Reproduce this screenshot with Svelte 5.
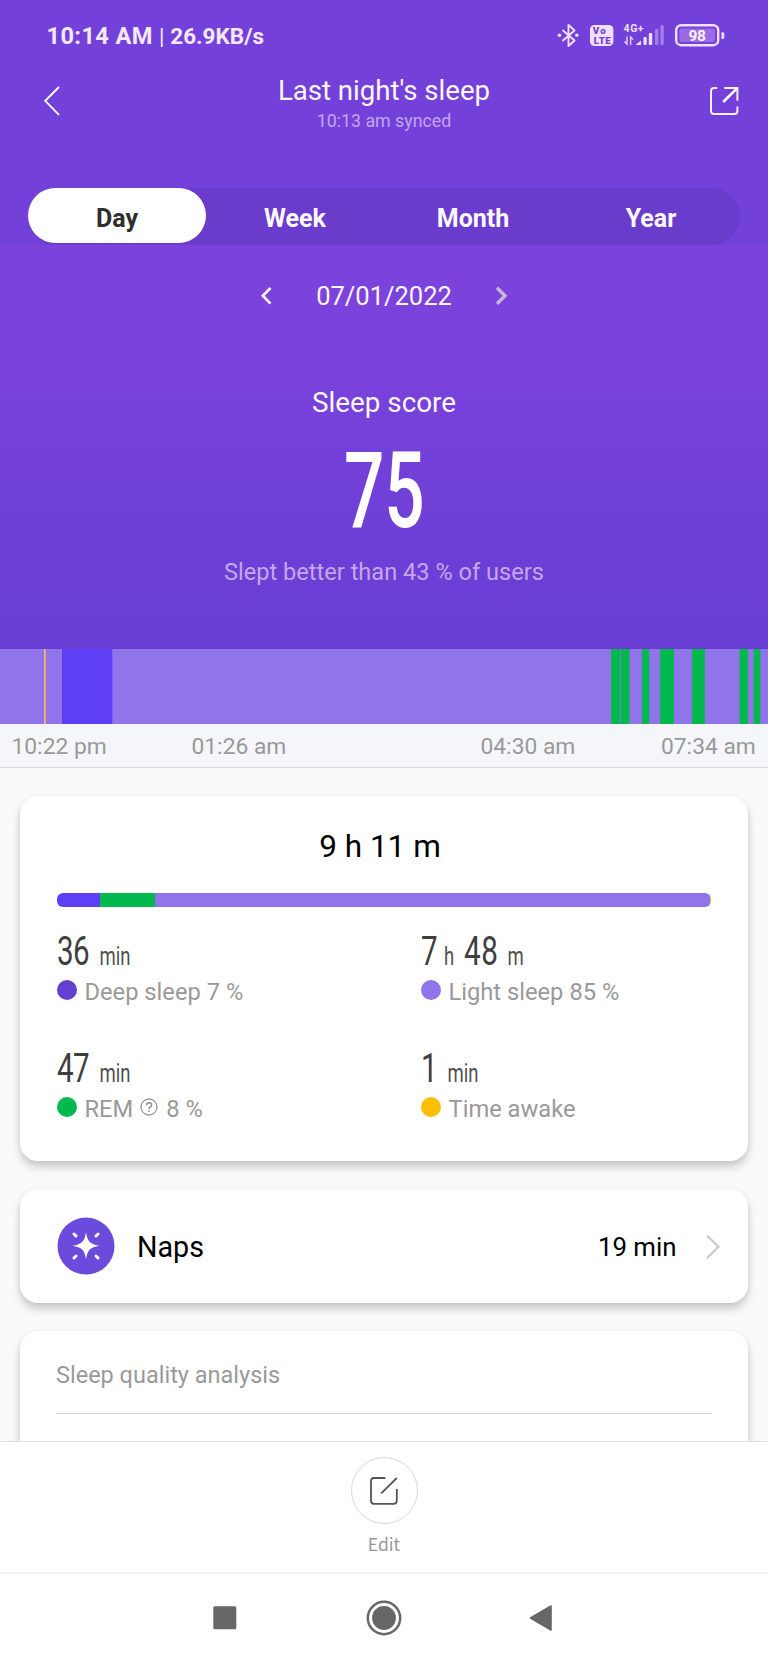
<script>
  const tabs = ['Day', 'Week', 'Month', 'Year'];

  // Sleep stage blocks along the night, in px of the 768px timeline.
  const stages = [
    { kind: 'awake', x: 44, w: 1.7 },
    { kind: 'deep', x: 62, w: 50.3 },
    { kind: 'rem', x: 611.2, w: 8.7 },
    { kind: 'rem', x: 620.8, w: 8.7 },
    { kind: 'rem', x: 642, w: 7.2 },
    { kind: 'rem', x: 660, w: 14 },
    { kind: 'rem', x: 692, w: 12.8 },
    { kind: 'rem', x: 739.6, w: 8.4 },
    { kind: 'rem', x: 753.6, w: 6.8 }
  ];

  const stats = [
    { parts: [['36', 'min']], color: '#6340d0', label: 'Deep sleep', pct: '7 %' },
    { parts: [['7', 'h'], ['48', 'm']], color: '#9074e9', label: 'Light sleep', pct: '85 %' },
    { parts: [['47', 'min']], color: '#03b94e', label: 'REM', pct: '8 %', help: true },
    { parts: [['1', 'min']], color: '#fcbf05', label: 'Time awake', pct: '' }
  ];
</script>

<div class="screen">
  <header class="top">
    <div class="status">
      <span class="clock">10:14 AM</span><span class="bar">|</span><span class="rate">26.9KB/s</span>
      <svg class="sys" width="170" height="28" viewBox="0 0 170 28">
        <g fill="none" stroke="#f1dffd" stroke-width="1.9" stroke-linejoin="round" stroke-linecap="round">
          <path d="M6 8.5 L17.5 18.5 L11.5 24 V3 L17.5 8.5 L6 18.5" />
        </g>
        <circle cx="2.4" cy="13.3" r="1.8" fill="#f1dffd" />
        <circle cx="19.8" cy="13.3" r="1.8" fill="#f1dffd" />
        <rect x="33" y="3" width="23.4" height="21" rx="4.5" fill="#f1dffd" />
        <text x="35.8" y="12.4" class="volte" textLength="13">Vo</text>
        <text x="36.8" y="21.6" class="volte" textLength="17">LTE</text>
        <text x="66.6" y="9.5" class="net" textLength="20">4G+</text>
        <g fill="none" stroke="#e6cffb" stroke-width="1.4">
          <path d="M70 14.5 V22 L67.5 19.5 M73.6 23 V15 L76 17.5" />
        </g>
        <g fill="#f1dffd">
          <path d="M78.5 23 L84 18.5 V23 Z" />
          <rect x="86.5" y="15" width="3.2" height="8" rx="1" />
          <rect x="91.8" y="11" width="3.4" height="12" rx="1" />
        </g>
        <g fill="#a47deb">
          <rect x="98" y="7" width="3.4" height="16" rx="1" />
          <rect x="103.4" y="3" width="3.4" height="20" rx="1" />
        </g>
        <rect x="119.2" y="3.2" width="42" height="20" rx="5" fill="none" stroke="#f1dffd" stroke-width="2.4" />
        <rect x="122.4" y="6.4" width="35.6" height="13.6" rx="2" fill="#9a6be4" />
        <path d="M164.5 10 q2.8 0 2.8 2 v3 q0 2 -2.8 2 z" fill="#f1dffd" />
        <text x="131.5" y="19" class="pct" textLength="17.5">98</text>
      </svg>
    </div>

    <div class="appbar">
      <svg class="back" width="18" height="32" viewBox="0 0 18 32">
        <path d="M16 2 L2.2 15.8 L16 29.8" fill="none" stroke="#fff" stroke-width="1.9" />
      </svg>
      <div class="titles">
        <div class="title">Last night's sleep</div>
        <div class="synced">10:13 am synced</div>
      </div>
      <svg class="share" width="30" height="30" viewBox="0 0 30 30">
        <g fill="none" stroke="#f8ecff" stroke-width="2">
          <path d="M8.2 2 H5 Q2 2 2 5 V25 Q2 28 5 28 H25.5 Q28.4 28 28.4 25 V20.5" />
          <path d="M15.2 2 H28.4 V14.8" />
        </g>
        <path d="M28 2.4 L14.2 16" fill="none" stroke="#fff" stroke-width="2.6" />
      </svg>
    </div>

    <nav class="tabs">
      {#each tabs as tab, i}
        <span class="tab" class:active={i === 0}><b>{tab}</b></span>
      {/each}
    </nav>
  </header>

  <section class="hero">
    <div class="date">
      <svg width="13" height="20" viewBox="0 0 13 20"><path d="M10.5 2 L2.8 9.8 L10.5 17.6" fill="none" stroke="#fdf3ff" stroke-width="2.7" /></svg>
      <span>07/01/2022</span>
      <svg width="13" height="20" viewBox="0 0 13 20"><path d="M2 1.8 L10 9.8 L2 17.8" fill="none" stroke="#c9b4dc" stroke-width="3.4" /></svg>
    </div>
    <div class="score-label">Sleep score</div>
    <div class="score"><span>75</span></div>
    <div class="compare">Slept better than 43 % of users</div>
  </section>

  <svg class="timeline" width="768" height="75" viewBox="0 0 768 75">
    <rect width="768" height="75" fill="#9074e9" />
    {#each stages as s}
      <rect class={s.kind} x={s.x} y="0" width={s.w} height="75" />
    {/each}
  </svg>
  <div class="axis">
    <span>10:22 pm</span><span>01:26 am</span><span>04:30 am</span><span>07:34 am</span>
  </div>

  <main class="cards">
    <section class="card summary">
      <div class="total">9 h 11 m</div>
      <div class="split"><i class="s-deep"></i><i class="s-rem"></i><i class="s-light"></i><i class="s-awake"></i></div>
      <div class="stats">
        {#each stats as s}
          <div class="stat">
            <div class="value" class:pair={s.parts.length > 1}>
              {#each s.parts as [n, u]}<span class="num">{n}</span><span class="unit">{u}</span>{/each}
            </div>
            <div class="legend">
              <i class="dot" style="background:{s.color}"></i>
              <span>{s.label}</span>
              {#if s.help}
                <svg width="18" height="18" viewBox="0 0 18 18">
                  <circle cx="9" cy="9" r="8" fill="none" stroke="#999" stroke-width="1.3" />
                  <path d="M6.5 7.3 Q6.5 4.7 9 4.7 Q11.6 4.7 11.6 7 Q11.6 8.2 10 9.1 Q9 9.7 9 11" fill="none" stroke="#8d8d8d" stroke-width="1.4" />
                  <circle cx="9" cy="13.1" r=".9" fill="#8d8d8d" />
                </svg>
              {/if}
              {#if s.pct}<span>{s.pct}</span>{/if}
            </div>
          </div>
        {/each}
      </div>
    </section>

    <section class="card naps">
      <svg width="58" height="58" viewBox="0 0 58 58">
        <circle cx="29" cy="29" r="28.5" fill="#6b4bdc" />
        <path d="M29 15.5 C30.6 24.6 33 27.3 42.5 28.8 C33 30.4 30.6 33 29 42.2 C27.4 33 25 30.4 15.5 28.8 C25 27.3 27.4 24.6 29 15.5 Z" fill="#fff" />
        <g stroke="#fff" stroke-width="3" stroke-linecap="round">
          <path d="M17 17 L19 19 M41 17 L39 19 M17 41 L19 39 M41 41 L39 39" />
        </g>
      </svg>
      <span class="naps-label">Naps</span>
      <span class="naps-value">19 min</span>
      <svg class="go" width="16" height="26" viewBox="0 0 16 26"><path d="M2 1.5 L13.4 12.8 L2 24.2" fill="none" stroke="#c9c9c9" stroke-width="2.2" /></svg>
    </section>

    <section class="card quality">
      <h2>Sleep quality analysis</h2>
    </section>
  </main>

  <footer class="edit">
    <span class="ring">
      <svg width="30" height="30" viewBox="0 0 30 30" fill="none" stroke="#555" stroke-width="1.8">
        <path d="M16.4 2 H5 Q2 2 2 5 V24.8 Q2 27.8 5 27.8 H24.6 Q27.8 27.8 27.8 24.8 V13" />
        <path d="M12.2 17.4 L27.8 2" />
      </svg>
    </span>
    <span class="edit-label">Edit</span>
  </footer>

  <div class="sysnav">
    <svg width="24" height="24" viewBox="0 0 24 24"><rect x=".3" y=".3" width="23" height="23" rx="1.5" fill="#676767" /></svg>
    <svg width="36" height="36" viewBox="0 0 36 36"><circle cx="18" cy="18" r="16.2" fill="none" stroke="#676767" stroke-width="2.5" /><circle cx="18" cy="18" r="11.9" fill="#676767" /></svg>
    <svg width="24" height="28" viewBox="0 0 24 28"><path d="M1.5 14 L22 2 V26 Z" fill="#676767" stroke="#676767" stroke-width="1.6" stroke-linejoin="round" /></svg>
  </div>
</div>

<style>
  :global(body) { margin: 0; }
  .screen {
    width: 768px; height: 1664px; overflow: hidden; background: #fafafb;
    display: flex; flex-direction: column;
    font-family: Roboto, sans-serif; color: #000; white-space: nowrap;
  }
  .screen > * { flex: none; box-sizing: border-box; }
  svg { display: block; flex: none; }

  .top { height: 245px; background: #7341d9; }
  .status { height: 72px; display: flex; align-items: center; padding: 0 41px 0 46.5px; color: #f5e7fe; font-weight: 700; }
  .clock { font-size: 23.6px; letter-spacing: .4px; }
  .bar { font-size: 22px; font-weight: 400; margin: 0 6px; }
  .rate { font-size: 22.5px; }
  .sys { margin-left: auto; }
  .volte { font: 900 9.8px Roboto, sans-serif; fill: #7341d9; }
  .net { font: 700 10.5px Roboto, sans-serif; fill: #f1dffd; }
  .pct { font: 700 15.5px Roboto, sans-serif; fill: #fbf2ff; }

  .appbar { height: 60px; display: grid; grid-template-columns: 1fr auto 1fr; padding: 0 29px 0 43px; color: #fff; }
  .back { margin-top: 13px; }
  .share { margin-top: 14px; justify-self: end; }
  .titles { text-align: center; padding-top: 1px; margin-left: -14px; }
  .title { font-size: 27.6px; line-height: 35px; color: #fdf6ff; }
  .synced { font-size: 17.8px; line-height: 22px; margin-top: 2px; color: #c5a4f0; }

  .tabs { margin: 56px 28px 0; height: 57px; border-radius: 29px; background: #6a3ccb; display: grid; grid-template-columns: repeat(4, 1fr); }
  .tab { height: 55px; display: flex; align-items: center; justify-content: center; color: #fdf7ff; font-size: 25px; padding-top: 5px; box-sizing: border-box; }
  .tab b { font-weight: 700; }
  .active { background: #fff; color: #2e2e2e; border-radius: 28px; }

  .hero { height: 404px; background: linear-gradient(#7c42dc 0, #7a42dc 28%, #6d3fd6 75%, #693dd3); text-align: center; padding-top: 33px; color: #fdf6ff; }
  .date { height: 36px; display: flex; align-items: center; justify-content: center; gap: 43px; font-size: 25.5px; }
  .score-label { margin-top: 70px; font-size: 27.8px; line-height: 37px; }
  .score { margin-top: 3px; height: 133px; line-height: 135px; font-size: 106px; font-weight: 500; color: #fff; }
  .score span { display: inline-block; transform: scaleX(.67); }
  .compare { font-size: 23.6px; line-height: 31px; color: #c6a6ef; }

  .awake { fill: #f4b95c; }
  .deep { fill: #5e3ff6; }
  .rem { fill: #03b94e; }
  .axis { height: 44px; background: #f5f6f9; border-bottom: 1px solid #d6d9df; display: grid; grid-template-columns: 180px 289px 180.5px 1fr; padding-left: 11.5px; font-size: 22.8px; line-height: 45px; color: #999; }

  .cards { height: 673px; overflow: hidden; padding: 28px 20px 0; }
  .card { background: #fff; border-radius: 18px; box-shadow: 0 6px 10px rgba(0, 0, 0, .19), 0 1px 5px rgba(0, 0, 0, .06); box-sizing: border-box; margin-bottom: 28px; }
  .summary { height: 365px; padding: 30px 37px 0; }
  .total { text-align: center; font-size: 31.5px; line-height: 41px; padding-right: 8px; }
  .split { height: 14px; margin-top: 26px; border-radius: 6px; overflow: hidden; display: flex; }
  .split i { display: block; }
  .s-deep { width: 43px; background: #5e3ff6; }
  .s-rem { width: 55px; background: #03b94e; }
  .s-light { flex: 1; background: #9074e9; }
  .s-awake { width: 1.5px; background: #fcbf05; }
  .stats { display: grid; grid-template-columns: 364px 1fr; grid-auto-rows: 117px; margin-top: 22px; }
  .value { height: 46px; line-height: 46px; transform: scaleX(.74); transform-origin: left; display: flex; align-items: baseline; color: #3f3f3f; }
  .num { font-size: 40px; font-weight: 450; letter-spacing: -.8px; }
  .unit { font-size: 25px; color: #505050; margin-left: 14px; }
  .pair .unit { margin-left: 9.5px; }
  .pair .unit + .num { margin-left: 13px; letter-spacing: 1px; }
  .pair .num + .unit:last-child { margin-left: 12px; }
  .legend { display: flex; align-items: center; height: 32px; margin-top: -1px; font-size: 23.7px; color: #999; }
  .legend span { line-height: 32px; padding-top: 3px; margin-right: 6px; }
  .legend svg { margin: 0 8px 0 1px; }
  .dot { width: 20px; height: 20px; border-radius: 50%; margin-right: 7.5px; }

  .naps { height: 114px; display: flex; align-items: center; padding: 0 27.5px 0 36.5px; }
  .naps-label { font-size: 28.7px; margin-left: 22.5px; padding-top: 2px; }
  .naps-value { font-size: 25.8px; margin-left: auto; padding-top: 2px; }
  .go { margin-left: 28px; margin-top: 1px; }
  .quality { height: 200px; padding: 29px 36px 0; margin: 0; }
  .quality h2 { margin: 0; font-size: 23.5px; font-weight: 400; line-height: 30px; color: #999; padding-bottom: 22.5px; border-bottom: 1px solid #d4d4d4; }

  .edit { height: 131px; background: #fff; border-top: 1.5px solid #e2e2e2; display: flex; flex-direction: column; align-items: center; padding-top: 15px; }
  .ring { width: 65px; height: 65px; border: 1px solid #d8d8d8; border-radius: 50%; display: flex; align-items: center; justify-content: center; }
  .edit-label { font: 17.5px/24px "Noto Sans CJK SC", "Noto Sans", sans-serif; color: #999; margin-top: 8px; }
  .sysnav { flex: 1 !important; background: #fff; border-top: 2px solid #f1f1f1; display: grid; grid-template-columns: 24px 36px 24px; column-gap: 129px; align-items: center; justify-content: center; padding-bottom: 2px; }
  .sysnav svg:last-child { margin-left: -2.5px; }
</style>
